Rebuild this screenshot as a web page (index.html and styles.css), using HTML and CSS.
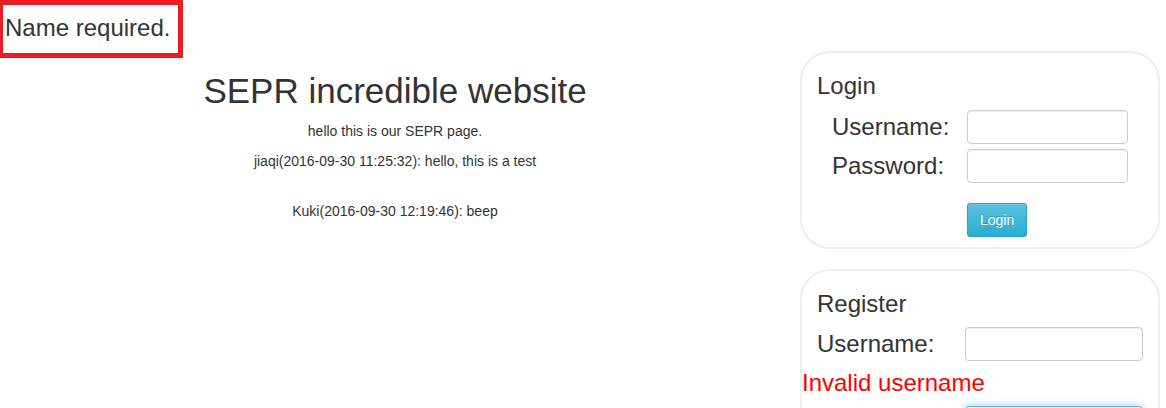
FILE: index.html
```html
<!DOCTYPE html>
<html lang="en">
<head>
<meta charset="utf-8">
<title>SEPR</title>
<link rel="stylesheet" href="styles.css">
</head>
<body>
<div class="notice" role="alert">Name required.</div>
<div class="page">
  <main class="main">
    <h1 class="headline">SEPR incredible website</h1>
    <p class="intro">hello this is our SEPR page.</p>
    <p class="message">jiaqi(2016-09-30 11:25:32): hello, this is a test</p>
    <p class="message">Kuki(2016-09-30 12:19:46): beep</p>
  </main>
  <aside class="sidebar">
    <form class="panel">
      <h2 class="panel-title">Login</h2>
      <div class="fields login-fields">
        <label for="login-user">Username:</label>
        <input class="field" id="login-user" type="text">
        <label for="login-pass">Password:</label>
        <input class="field" id="login-pass" type="password">
        <button class="button" type="submit">Login</button>
      </div>
    </form>
    <form class="panel">
      <h2 class="panel-title">Register</h2>
      <div class="fields register-fields">
        <label for="reg-user">Username:</label>
        <input class="field" id="reg-user" type="text">
      </div>
      <p class="error">Invalid username</p>
      <div class="fields register-fields">
        <input class="field second active" type="password" aria-label="Register field">
      </div>
    </form>
  </aside>
</div>
</body>
</html>
```
FILE: styles.css
```css
* {
  box-sizing: border-box;
}

html {
  height: 100%;
  overflow: hidden;
}

body {
  margin: 0;
  height: 100%;
  background: #fff;
  color: #333;
  font: 14px/20px "Liberation Sans", Arial, sans-serif;
}

.notice {
  width: fit-content;
  border: 5px solid #ed1c24;
  border-left-width: 3px;
  padding: 3px 8px 5px 2px;
  font-size: 24px;
  line-height: 40px;
}

.page {
  display: grid;
  grid-template-columns: 1fr 360px;
  column-gap: 10px;
  margin-top: -7px;
  padding-right: 6px;
}

.main {
  text-align: center;
}

.headline {
  margin: 20px 0 10px;
  font-size: 35px;
  font-weight: normal;
  line-height: 40px;
}

.intro {
  margin: 0 0 10px;
}

.message {
  margin: 0 0 30px;
}

.panel {
  margin: 0 0 20px;
  border: 2px solid #eee;
  border-radius: 30px;
  padding: 13px 0 10px;
}

.panel-title {
  margin: 0;
  padding: 0 15px;
  font-size: 24px;
  font-weight: normal;
  line-height: 40px;
}

.fields {
  display: grid;
  row-gap: 5px;
  align-items: center;
  font-size: 24px;
  line-height: 34px;
}

.login-fields {
  grid-template-columns: 135px 1fr;
  padding: 4px 30px 0;
}

.register-fields {
  grid-template-columns: 148px 1fr;
  padding: 3px 15px 0;
}

.field {
  width: 100%;
  height: 34px;
  border: 1px solid #ccc;
  border-radius: 4px;
  padding: 6px;
  background: #fff;
  box-shadow: inset 0 1px 1px rgba(0, 0, 0, 0.075);
  color: #555;
  font: 14px/20px "Liberation Sans", Arial, sans-serif;
}

.active {
  border-color: #66afe9;
  outline: 0;
  box-shadow: inset 0 1px 1px rgba(0, 0, 0, 0.075), 0 0 8px rgba(82, 168, 236, 0.6);
}

.second {
  grid-column: 2;
}

.button {
  grid-column: 2;
  justify-self: start;
  height: 34px;
  margin-top: 15px;
  border: 1px solid #28a1c5;
  border-radius: 3px;
  padding: 6px 12px;
  background: linear-gradient(#5bc0de, #2aabd2);
  box-shadow: inset 0 1px 0 rgba(255, 255, 255, 0.15), 0 1px 1px rgba(0, 0, 0, 0.075);
  color: #fff;
  font: 14px/20px "Liberation Sans", Arial, sans-serif;
  text-shadow: 0 -1px 0 rgba(0, 0, 0, 0.2);
}

.error {
  margin: 2px 0 0;
  color: #f00;
  font-size: 24px;
  line-height: 40px;
}
```
